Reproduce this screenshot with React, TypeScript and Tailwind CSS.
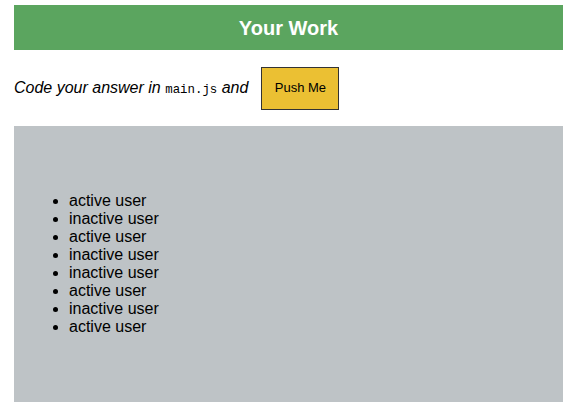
import React from "react";

const items = [
  "active user",
  "inactive user",
  "active user",
  "inactive user",
  "inactive user",
  "active user",
  "inactive user",
  "active user",
];

export default function App() {
  return (
    <div className="w-[575px] h-[411px] bg-white pt-[5px] px-[14px] [font-family:'Liberation_Sans',Arial,sans-serif]">
      <div className="w-[549px]">
        <div className="h-[45px] bg-[#5ba55f] flex items-center justify-center text-white font-bold text-[20px]">
          Your Work
        </div>
        <div className="h-[76px] flex items-center">
          <span className="italic text-[16px] text-black">
            Code your answer in{" "}
            <code className="not-italic text-[12.4px] [font-family:'Liberation_Mono',monospace]">main.js</code>{" "}
            and
          </span>
          <button className="ml-[13px] w-[78px] h-[43px] bg-[#ebc033] border border-[#333] text-[13px] text-black flex items-center justify-center">
            Push Me
          </button>
        </div>
        <div className="h-[276px] bg-[#bec3c6] pt-[66px] pl-[15px]">
          <ul className="list-disc pl-[40px] text-[16px] leading-[18px] text-black">
            {items.map((t, i) => (
              <li key={i}>{t}</li>
            ))}
          </ul>
        </div>
      </div>
    </div>
  );
}
